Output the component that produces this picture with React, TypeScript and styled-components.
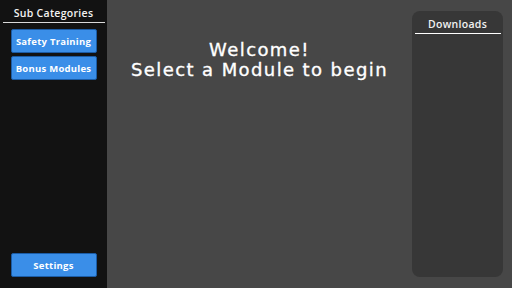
import React from "react";
import styled, { createGlobalStyle } from "styled-components";

const GlobalStyle = createGlobalStyle`
  html, body, #root {
    margin: 0;
    padding: 0;
    width: 100%;
    height: 100%;
  }
  body {
    font-family: "Open Sans", "Noto Sans", "DejaVu Sans", sans-serif;
    background: #474747;
    overflow: hidden;
  }
`;

const Screen = styled.div`
  display: flex;
  width: 512px;
  height: 288px;
  background: #474747;
`;

const Sidebar = styled.aside`
  width: 107px;
  flex-shrink: 0;
  background: #121212;
  display: flex;
  flex-direction: column;
  align-items: center;
  padding: 6px 0 11px;
  box-sizing: border-box;
`;

const SideHeading = styled.div`
  width: 102px;
  color: #f2f2f2;
  font-size: 10.5px;
  font-weight: 600;
  line-height: 15px;
  text-align: center;
  padding-bottom: 1px;
  border-bottom: 1.5px solid #d9d9d9;
  letter-spacing: 0.3px;
`;

const ButtonList = styled.div`
  display: flex;
  flex-direction: column;
  gap: 3px;
  margin-top: 6px;
`;

const Spacer = styled.div`
  flex: 1;
`;

const NavButton = styled.button`
  width: 86px;
  height: 24px;
  background: #3a8ee8;
  border: 1px solid #1b5ca6;
  border-radius: 2px;
  color: #ffffff;
  font-family: inherit;
  font-size: 9.5px;
  font-weight: 700;
  letter-spacing: 0.25px;
  padding: 0;
  cursor: pointer;
`;

const Main = styled.main`
  flex: 1;
  display: flex;
  justify-content: space-between;
  padding: 11px 9px 11px 0;
`;

const Welcome = styled.h1`
  flex: 1;
  margin: 29px 0 0;
  color: #ffffff;
  font-family: "DejaVu Sans", "Open Sans", sans-serif;
  font-size: 18px;
  font-weight: 400;
  line-height: 19.5px;
  text-align: center;
  letter-spacing: 1.4px;
  -webkit-text-stroke: 0.35px #ffffff;
`;

const DownloadsPanel = styled.section`
  width: 91px;
  background: #373737;
  border-radius: 8px;
  display: flex;
  flex-direction: column;
  align-items: center;
  padding-top: 6px;
  box-sizing: border-box;
`;

const PanelTitle = styled.div`
  width: 86px;
  color: #f2f2f2;
  font-size: 10.5px;
  font-weight: 600;
  line-height: 15px;
  text-align: center;
  padding-bottom: 1px;
  border-bottom: 1.5px solid #ffffff;
  letter-spacing: 0.3px;
`;

const categories = ["Safety Training", "Bonus Modules"];

const App = () => {
  return (
    <>
      <GlobalStyle />
      <Screen>
        <Sidebar>
          <SideHeading>Sub Categories</SideHeading>
          <ButtonList>
            {categories.map((c) => (
              <NavButton key={c}>{c}</NavButton>
            ))}
          </ButtonList>
          <Spacer />
          <NavButton>Settings</NavButton>
        </Sidebar>
        <Main>
          <Welcome>
            Welcome!
            <br />
            Select a Module to begin
          </Welcome>
          <DownloadsPanel>
            <PanelTitle>Downloads</PanelTitle>
          </DownloadsPanel>
        </Main>
      </Screen>
    </>
  );
};

export default App;
